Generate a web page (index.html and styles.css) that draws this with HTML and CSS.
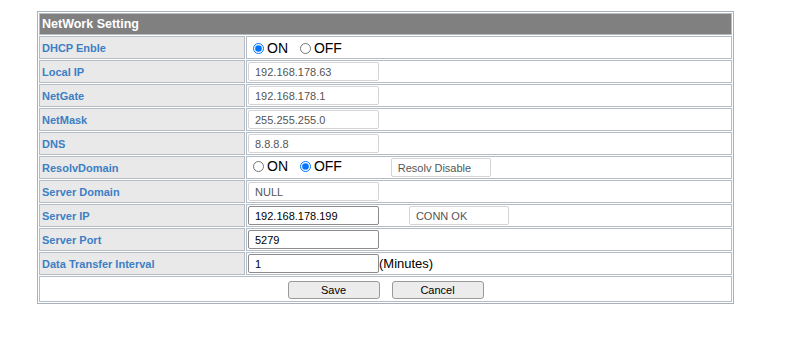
FILE: index.html
```html
<!DOCTYPE html>
<html lang="en">
<head>
    <meta charset="UTF-8">
    <title>NetWork Setting</title>
    <link rel="stylesheet" href="styles.css">
</head>
<body>
    <table class="setting">
        <tr>
            <td class="head" colspan="2">NetWork Setting</td>
        </tr>
        <tr>
            <td class="label">DHCP Enble</td>
            <td class="value">
                <label class="radio"><input type="radio" name="dhcp" checked>ON</label>
                <label class="radio"><input type="radio" name="dhcp">OFF</label>
            </td>
        </tr>
        <tr>
            <td class="label">Local IP</td>
            <td class="value"><input class="field" type="text" value="192.168.178.63" disabled></td>
        </tr>
        <tr>
            <td class="label">NetGate</td>
            <td class="value"><input class="field" type="text" value="192.168.178.1" disabled></td>
        </tr>
        <tr>
            <td class="label">NetMask</td>
            <td class="value"><input class="field" type="text" value="255.255.255.0" disabled></td>
        </tr>
        <tr>
            <td class="label">DNS</td>
            <td class="value"><input class="field" type="text" value="8.8.8.8" disabled></td>
        </tr>
        <tr>
            <td class="label">ResolvDomain</td>
            <td class="value">
                <label class="radio"><input type="radio" name="resolv">ON</label>
                <label class="radio"><input type="radio" name="resolv" checked>OFF</label>
                <input class="status status-resolv" type="text" value="Resolv Disable" disabled>
            </td>
        </tr>
        <tr>
            <td class="label">Server Domain</td>
            <td class="value"><input class="field" type="text" value="NULL" disabled></td>
        </tr>
        <tr>
            <td class="label">Server IP</td>
            <td class="value">
                <input class="field" type="text" value="192.168.178.199">
                <input class="status status-conn" type="text" value="CONN OK" disabled>
            </td>
        </tr>
        <tr>
            <td class="label">Server Port</td>
            <td class="value"><input class="field" type="text" value="5279"></td>
        </tr>
        <tr>
            <td class="label">Data Transfer Interval</td>
            <td class="value"><input class="field" type="text" value="1"><span class="unit">(Minutes)</span></td>
        </tr>
        <tr>
            <td class="actions" colspan="2">
                <button class="btn" type="button">Save</button><button class="btn" type="button">Cancel</button>
            </td>
        </tr>
    </table>
</body>
</html>
```

FILE: styles.css
```css
body {
    margin: 0;
    padding: 11px 0 0 37px;
    font-family: "Liberation Sans", Arial, sans-serif;
    background: #fff;
}
.setting {
    width: 697px;
    border-collapse: separate;
    border-spacing: 1px;
    border: 1px solid #a8b0ba;
}
.setting td {
    border: 1px solid #b4bcc6;
    padding: 0 2px;
    height: 21px;
}
.setting .head {
    height: 20px;
    background: #808080;
    color: #fff;
    font-weight: bold;
    font-size: 12.5px;
}
.label {
    width: 200px;
    background: #e9e9e9;
    color: #3c7fc4;
    font-weight: bold;
    font-size: 11px;
}
.setting .value {
    padding: 0 1px;
    background: #fff;
    font-size: 14px;
    white-space: nowrap;
}
.radio {
    margin-right: 3px;
}
.radio input {
    width: 11px;
    height: 11px;
    margin: 0 3px 0 5px;
    vertical-align: -1px;
}
.field,
.status {
    box-sizing: border-box;
    height: 19px;
    padding: 0 6px;
    margin: 0;
    font-family: "Liberation Sans", Arial, sans-serif;
    font-size: 11px;
    color: #000;
    border: 1px solid #8c8c8c;
    border-radius: 2px;
    background: #fff;
    vertical-align: middle;
}
.field {
    width: 131px;
}
.field:disabled,
.status:disabled {
    color: #555;
    border-color: #d4d4d4;
}
.status {
    width: 100px;
}
.status-resolv {
    margin-left: 42px;
}
.status-conn {
    margin-left: 26px;
}
.unit {
    font-size: 13px;
    vertical-align: middle;
}
.actions {
    text-align: center;
    background: #fff;
}
.setting .actions {
    height: 24px;
}
.btn {
    width: 92px;
    height: 18px;
    margin: 2px 6px 0;
    padding: 0;
    font-family: "Liberation Sans", Arial, sans-serif;
    font-size: 11px;
    color: #000;
    background: #ececec;
    border: 1px solid #9a9a9a;
    border-radius: 3px;
}
```
